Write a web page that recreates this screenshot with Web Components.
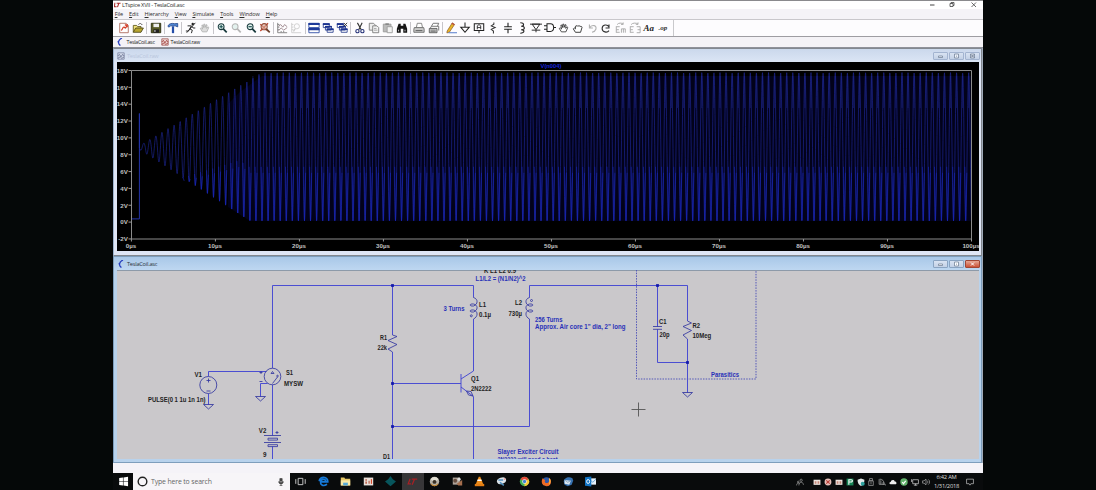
<!DOCTYPE html>
<html lang="en">
<head>
<meta charset="utf-8">
<title>LTspice XVII - TeslaCoil.asc</title>
<style>
html,body{margin:0;height:100%;background:#050808;overflow:hidden}
body{font-family:"Open Sans","Noto Sans",sans-serif;color:#333;display:flex;justify-content:center}
</style>
</head>
<body>
<desktop-screen></desktop-screen>
<script>
const define=(name,css,html,setup)=>customElements.define(name,class extends HTMLElement{
  connectedCallback(){
    if(this.shadowRoot)return;
    const t=document.createElement('template');
    t.innerHTML='<style>*{box-sizing:border-box}'+css+'</style>'+(typeof html==='function'?html(this):html);
    this.attachShadow({mode:'open'}).appendChild(t.content.cloneNode(true));
    if(setup)setup(this,this.shadowRoot);
  }
});

/* Toolbar glyphs, 14x14 grid */
const lens=(c)=>`<circle cx="6" cy="5.5" r="3.4" fill="#e3f1ee" stroke="${c}" stroke-width="1.2"/><path d="M8.5 8l4 4" stroke="${c}" stroke-width="2"/>`;
const cascade='<path d="M1.5 2h7v4.5h-7zM4 5h7v4.5H4zM6 8h7v4H6z" fill="#fff" stroke="#2a3f8f"/><path d="M1 2.5h8M3.5 5.5h8M5.500 8.500h8" stroke="#1c3390" stroke-width="1.8"/>';
const hand='<path d="M4 11.500L1.500 7.500l1-.8 1.700 1.500-.9-4.500 1.200-.2 1 3 .1-4h1.200l.4 3.800 1.100-3.200 1.100.3-.5 4 1.600-1.800.9.800-2.200 5.100z"';
const I={
 new:'<path d="M2 1.500h7.500l2.500 2.500v8.500H2z" fill="#fff" stroke="#a65"/><path d="M3.500 9.500c2 .5 1.500-4 3.500-3.500s1 3 3.500-2M8 3.500h2.800v2.700" stroke="#d6402c" stroke-width="1.500" fill="none"/>',
 open:'<path d="M1.500 12V4h4l1 1.300h4V8" fill="#f2e27a" stroke="#5d571c"/><path d="M1.500 12l2.800-5h9L10.500 12z" fill="#b8a530" stroke="#4c4718"/><path d="M7.500 3c2-2 3-1.500 4.500.5" stroke="#444" fill="none"/>',
 save:'<path d="M1.500 1.500h11v11h-11z" fill="#585b26" stroke="#27290c"/><path d="M4 2h6.500v4H4z" fill="#eee"/><path d="M4 8.500h6.500v4H4z" fill="#222"/><path d="M5 9.500h1.500v2H5z" fill="#ddd"/>',
 hammer:'<path d="M1 5c1-3 4-4 8-3l3.500-.3v4L9.500 4.500H4L2.500 6z" fill="#4f86d4" stroke="#1d3f86" stroke-width=".9"/><path d="M5.700 5h2.600v8H5.700z" fill="#244da8"/>',
 run:'<circle cx="9" cy="2.300" r="1.400" fill="#222"/><path d="M3 4.500h4.500L5.500 8l3 1.500-1 3.500M5.500 8L4 10.500H1M8 5l1.500 2H12M12 1L2 12.500" stroke="#222" stroke-width="1.100" fill="none"/>',
 stop:hand+' fill="#ddd" stroke="#aaa" stroke-width=".9"/>',
 zin:lens('#17393c')+'<path d="M4 5.500h4M6 3.500v4" stroke="#124b4b" stroke-width="1.200"/>',
 pan:lens('#b5b5b5'),
 zout:lens('#17393c')+'<path d="M4 5.500h4" stroke="#124b4b" stroke-width="1.300"/>',
 zfull:'<path d="M1.500 2.500l9 8M10.500 1.500l-9 9" stroke="#c0452e" stroke-width="1.600"/><circle cx="6" cy="5.500" r="3.600" fill="#d9b1a0" fill-opacity=".6" stroke="#944a36" stroke-width="1.200"/><path d="M8.500 8l4 4" stroke="#69402d" stroke-width="2"/>',
 auto:'<path d="M2 1v11.500h11M2 3h2M2 6h2M2 9h2M6 12v-1.500M9 12v-1.500" stroke="#777" fill="none"/><path d="M3 5l2.500-2L8 6l2-3 3 2.500M3 10l3-3 3 2.500 4-3" stroke="#978085" fill="none"/>',
 auto2:'<path d="M2 1v11.500h11M2 3h2M2 6h2M2 9h2" stroke="#ccc" fill="none"/><circle cx="8" cy="5" r="3" fill="none" stroke="#ccc"/><path d="M6 8l-2 3" stroke="#ccc" stroke-width="1.500"/>',
 tile:'<path d="M1 1.500h12v5H1zM1 7.500h12v5H1z" fill="#fff" stroke="#2746a3"/><path d="M.500 2.300h13M.500 8.300h13" stroke="#1d3999" stroke-width="2.400"/>',
 casc:cascade,
 closeall:cascade+'<path d="M9 1l4 4M13 1L9 5" stroke="#333" stroke-width="1.100"/>',
 cut:'<path d="M4 1l4.500 8M9.500 1L5.500 9" stroke="#333" stroke-width="1.300"/><circle cx="4" cy="10.700" r="1.900" fill="none" stroke="#29357a" stroke-width="1.300"/><circle cx="9.800" cy="10.700" r="1.900" fill="none" stroke="#29357a" stroke-width="1.300"/>',
 copy:'<path d="M1.500 1.500h5l2 2v6h-7z" fill="#eee" stroke="#777"/><path d="M5.500 4.500h5l2 2v6h-7z" fill="#f4f4f4" stroke="#777"/><path d="M7 7.500h3M7 9.500h4" stroke="#888" stroke-width=".8"/>',
 paste:'<path d="M1.500 2.500h9v9h-9z" fill="#bbb" stroke="#999"/><path d="M4 1.500h4v2H4z" fill="#888"/><path d="M6 5.500h6v7H6z" fill="#f3f3f3" stroke="#999"/>',
 find:'<path d="M3 2h2.500v2.500h3V2H11l2 6v4.500H8.500V8h-3v4.500H1V8z" fill="#151515"/><path d="M3 9v2M10.500 9v2" stroke="#ddd"/>',
 print:'<path d="M4 6l1-4.500h5L11 6" fill="#fff" stroke="#777"/><path d="M1.500 6.500h11l.5 2v3.500H1V8.500z" fill="#c9c9c9" stroke="#666"/><path d="M3 10h8" stroke="#555"/>',
 setup:'<path d="M4 5l2-3.500h6.500L11 5M2.500 7.500L4 5h8.500v5" fill="#fff" stroke="#666"/><path d="M1.500 7.500h9v5h-9z" fill="#ccc" stroke="#555"/><path d="M3 9.500h6M3 11h6" stroke="#555" stroke-width=".7"/>',
 pencil:'<path d="M2.500 10.500L8.500 1l2.700 1.800-6 9-3 1z" fill="#e7b528" stroke="#8b5824" stroke-width=".8"/><path d="M8 1.500l2.800 1.800" stroke="#bc4a45" stroke-width="1.500"/><path d="M4 12.500h10" stroke="#6688d1" stroke-width="1.300"/>',
 gnd:'<path d="M7 .5V6M2 6h10L7 12z" fill="none" stroke="#222" stroke-width="1.200"/>',
 label:'<path d="M1.500 2h11v8h-11zM7 10v3" fill="none" stroke="#222" stroke-width="1.200"/><path d="M5 8.500V4.500L7 3l2 1.500v4M5 6.500h4" fill="none" stroke="#222"/>',
 res:'<path d="M8 .5v2L5 4.500l4.500 2-4.500 2 2.500 2v3" fill="none" stroke="#333" stroke-width="1.200"/>',
 cap:'<path d="M7 1v4.500M7 8.500V13M2.500 5.500h9M2.500 8.500h9" stroke="#222" stroke-width="1.300"/>',
 ind:'<path d="M5 1c5 0 5 4 1 4 5 0 5 4 0 4 5 0 4 4-1 4" fill="none" stroke="#222" stroke-width="1.200"/>',
 diode:'<path d="M0 2.500h14M2.500 2.500h9L7 9zM2 9.500h10M7 9.500V12" fill="none" stroke="#222" stroke-width="1.100"/>',
 gate:'<path d="M3.500 2h4c5 0 5 9 0 9h-4zM0 4.500h3.500M0 8.500h3.500M11.200 6.500H14" fill="none" stroke="#222" stroke-width="1.200"/>',
 move:hand+' fill="#fff" stroke="#222" stroke-width=".9"/>',
 drag:'<path d="M4 12L1.500 8l1.300-1L4 8V5c1-1 2-.8 2 0 .5-1 2-.8 2 0 .7-.8 2-.4 2 .3.800-.3 1.700 0 1.700 1L10 12z" fill="#fff" stroke="#222"/>',
 undo:'<path d="M4 3v4h4M4 7c3-5 9-3 7.500 1.500C11 10 9.500 11.500 7 12" fill="none" stroke="#b0b0b0" stroke-width="1.300"/>',
 redo:'<path d="M10.500 3v4h-4M10.500 5.800C8.500 2 2.500 3 2.500 7.500c0 4.500 6 5.500 8 2.500" fill="none" stroke="#333" stroke-width="1.300"/>',
 rot:'<path d="M2.500 3C4 .8 8 .8 9.500 2.500M9.500.5v2.300H7M1.500 5v7.500M1.500 5.500h4M1.500 9h3M1.500 12h4M7.500 12.500V8h4.500v4.500M9.800 8v4.500" fill="none" stroke="#aaa" stroke-width="1.100"/>',
 mir:'<path d="M2.500 3C4 .8 9 .8 10.500 2.500M10.500.5v2.300H8M1.500 5v7.500M1.500 5.500h4M1.500 9h3M1.500 12h4M9 5.500h4v7H9M10 9h3" fill="none" stroke="#aaa" stroke-width="1.100"/>'
};
define('tool-icon',
 ':host{display:flex;flex:0 0 14.13px;height:12px;align-items:center;justify-content:center;font:italic 700 9px "Liberation Serif",serif;color:#222}svg{width:12px;height:12px;display:block}',
 el=>{const n=el.getAttribute('name');return I[n]?`<svg viewBox="0 0 14 14">${I[n]}</svg>`:'<slot></slot>'});
define('tool-sep',':host{display:block;flex:0 0 1px;height:12px;margin:0 1.200px;background:#c7c5ca}','');

const tools='new open | save | hammer | run stop | zin pan zout zfull | auto auto2 | tile casc closeall | cut copy paste find | print setup | pencil gnd label res cap ind diode gate move drag undo redo rot mir'.split(' ')
 .map(n=>n==='|'?'<tool-sep></tool-sep>':`<tool-icon name="${n}"></tool-icon>`).join('');
define('tool-bar',
 ':host{display:flex;height:18px;align-items:center;padding:0 0 1px 4px;background:#fdfcfe;border-top:1px solid #c9c7cb;border-bottom:1px solid #9e9da2}.op{font:italic 700 7px "Liberation Serif",serif;color:#333}i{display:block;width:1px;height:16px;background:#c9c9cc;margin-left:3px}',
 tools+'<tool-icon name="txt">Aa</tool-icon><tool-icon name="txt"><span class="op">.op</span></tool-icon><i></i>');

define('window-title',
 ':host{display:flex;height:9px;align-items:center;padding-left:1px;background:#fff;border-top:1px solid #8a8a8d;font-size:5.700px;letter-spacing:-.25px;color:#2c2c2c}svg{display:block}.logo{width:7px;height:8px;margin-right:1px}span{flex:1;white-space:nowrap}.ctl{width:52px;height:8px;margin-right:5px}',
 '<svg class="logo" viewBox="0 0 8 8"><path d="M1 1.500L.5 6h2.500M3 2h4.500M5.500 2L4 6.500" stroke="#a92b2b" stroke-width="1.200" fill="none"/></svg><span><slot></slot></span><svg class="ctl" viewBox="0 0 52 8"><path d="M4 4h4.500" stroke="#444"/><path d="M24 2.500h3v3h-3zM25 2.500v-1h3v3h-1M45.500 1.500l4.500 4.500M50 1.500l-4.500 4.500" stroke="#444" fill="none" stroke-width=".8"/></svg>');

define('menu-bar',
 ':host{display:flex;height:10px;align-items:center;padding-left:1.700px;gap:6px;background:#f5f3f7;font-size:5.500px;letter-spacing:-.08px;color:#2c2c2c}u{text-decoration-thickness:.5px;text-underline-offset:.5px}',
 ['File','Edit','Hierarchy','View','Simulate','Tools','Window','Help'].map(s=>`<span><u>${s[0]}</u>${s.slice(1)}</span>`).join(''));

const docIcon={
 asc:'<path d="M7.500 0C2 2.500 2 7 5.500 9.500M2 4.700h2" stroke="#263dbd" stroke-width="1.600" fill="none"/>',
 raw:'<path d="M1 1h8v8H1z" fill="#eed7d4" stroke="#a35c58"/><path d="M1 5l2-2 2 3 2-3 2 2M1 8l3-2 2 2 3-2" stroke="#9c3430" fill="none"/>',
 rawdim:'<path d="M1 1h8v8H1z" fill="#d3daea" stroke="#7e87a3"/><path d="M1 5l2-2 2 3 2-3 2 2M1 8l3-2 2 2 3-2" stroke="#66708f" fill="none"/>'};
define('doc-icon',':host{display:block;width:8px;height:8px}svg{display:block;width:100%;height:100%}',el=>`<svg viewBox="0 0 10 10">${docIcon[el.getAttribute('kind')]}</svg>`);
define('tab-bar',
 ':host{display:flex;height:11px;background:#f4f2f6;border-bottom:1px solid #8e9099;font-size:5.350px;letter-spacing:-.26px;color:#222}div{display:flex;align-items:center;gap:2.500px;padding-left:3px;width:45px;white-space:nowrap}div:first-child{background:#fdfcff}div+div{gap:1.500px}',
 '<div><doc-icon kind="asc"></doc-icon>TeslaCoil.asc</div><div><doc-icon kind="raw"></doc-icon>TeslaCoil.raw</div>');

define('child-window',
 `:host{display:flex;flex-direction:column;border:1px solid #82878f;border-left-color:#9eb4ce;padding:0 2px 3px 3px;background:#dfe6f5;overflow:hidden}
 :host([active]){background:#b8d2ec;border-color:#7e9ebc}
 header{display:flex;flex:0 0 13px;align-items:center;height:13px;gap:2px;font-size:5.600px;letter-spacing:-.22px;color:#b9c6dd;margin:0 -2px 0 -3px;padding:0 1px 0 3px;background:linear-gradient(#cbd8ec,#dbe5f5)}
 :host([active]) header{color:#2a2f38;background:linear-gradient(#a9c8e8,#bed7f1)}
 span{flex:1}b{display:block;width:15px;height:8px;border:1px solid #a3b4d0;border-radius:1px;margin-left:-1px;background:linear-gradient(#d9e3f2,#c3d1e6)}
 svg{display:block;width:13px;height:6px}
 :host([active]) b{border-color:#8aa4c2}:host([active]) b.x{background:linear-gradient(#e6a795,#cc5237);border-color:#a14735}`,
 el=>{const a=el.hasAttribute('active'),c=a?'#fff':'#edf2fa',s='#69788f';const b=(k,p)=>`<b class="${k}"><svg viewBox="0 0 13 6">${p}</svg></b>`;
 return `<header><doc-icon kind="${a?'asc':'rawdim'}"></doc-icon><span>${el.getAttribute('label')}</span>${b('',`<path d="M4.500 3h4v1.500h-4z" fill="${c}" stroke="${s}" stroke-width=".7"/>`)}${b('',`<path d="M4.500 1h4v4h-4z" fill="${c}" stroke="${s}" stroke-width=".7"/><path d="M6 2.700h1v.8H6z" fill="${s}"/>`)}${b('x',`<path d="M4.500 1h4v4h-4z" fill="${a?'none':c}" stroke="${a?'none':s}" stroke-width=".7"/><path d="M5 1.500l3 3M8 1.500l-3 3" stroke="${a?'#fff':s}" stroke-width="1"/>`)}</header><slot></slot>`});

/* Waveform viewer */
define('wave-plot',
 ':host{display:block;background:#000;height:189px;overflow:hidden}svg{display:block}text{font:700 6.200px "Liberation Sans",sans-serif;fill:#c0c0c0}',
 ()=>{
  const X0=131.4,PX=8.401,yv=v=>222.1-v*8.422,T=6.066,ref=325.7;
  const dnAt=t=>Math.min(8.75,.3+.645*(t-1));
  let ax='',d='M140 150';
  for(let i=-1;i<=9;i++){const y=yv(i*2);ax+=`<path d="M128.500 ${y}h3" stroke="#999"/><text x="127.800" y="${y+2.300}" text-anchor="end">${i*2}V</text>`}
  for(let i=0;i<=10;i++){const x=X0+i*10*PX;ax+=`<path d="M${x} 239v2.500" stroke="#999"/><text x="${x-.4}" y="248" text-anchor="middle">${i*10}µs</text>`}
  for(let x=140;x<=971.5;x+=.25){
    const t=(x-X0)/PX;
    const up=Math.min(8.85,.2+.595*(t-1)),dn=dnAt(t);
    const c=Math.cos((x-ref)/T*2*Math.PI);
    d+=`L${x} ${yv(8.9+(c>0?up*c:dn*c)).toFixed(1)}`;
  }
  let low='',hi='';
  for(let k=-25;k<=106;k++){const x=ref+k*T,b=x-T/2,g=Math.min(1,(b-180)/60);
    if(x<971&&x>250)hi+=`M${x.toFixed(1)} 76V108`;
    if(g>0&&b<970){const end=Math.min(221.5,yv(8.9-dnAt((b-X0)/PX)));const top=end-54*g;
      low+=`M${(b-.8).toFixed(1)} ${(top+3*(1-g)).toFixed(1)}L${b.toFixed(1)} ${end.toFixed(1)}L${(b+1.1).toFixed(1)} ${(top+6).toFixed(1)}`}}
  return `<svg width="862" height="189" viewBox="117 62 862 189"><path d="M240 92L262 76H971V221H250L228 207V104z" fill="#04042c" opacity=".6"/><path d="${d}" fill="none" stroke="#1e2799" stroke-width=".75" opacity=".85"/><path d="${hi}" stroke="#26319e" stroke-width=".8" opacity=".55"/><path d="${low}" fill="none" stroke="#1826be" stroke-width=".9" opacity=".65"/><path d="M${X0} 218.900H139.400V113.500V148" fill="none" stroke="#2333a8"/><path d="M131.500 70.500H971.500V239H131.500z" fill="none" stroke="#8b8b8b"/>${ax}<text x="540.500" y="68" textLength="21" lengthAdjust="spacingAndGlyphs" style="fill:#1423dc">V(n004)</text></svg>`});

/* Schematic editor */
define('schematic-view',
 ':host{display:block;background:#cac8cb;height:189px;overflow:hidden;box-shadow:inset 0 1px #8d9aa9}svg{display:block}text{font:700 6.700px "Liberation Sans",sans-serif;fill:#222}.n{fill:#2930b8}.w{fill:none;stroke:#4348d2;stroke-width:.95}',
 ()=>{
  const t=(s,x,y,w,c='')=>`<text x="${x}" y="${y}" textLength="${w}" lengthAdjust="spacingAndGlyphs" class="${c}">${s}</text>`;
  const dot=(x,y)=>`<path d="M${x-1.400} ${y-1.400}h2.800v2.800h-2.800z" fill="#1519aa"/>`;
  return `<svg width="862" height="189" viewBox="117 270 862 189">
  <path class="w" d="M272.500 368.200V285.500H473.500V297M529.500 297V285.500H687.500V321M392.500 285.500V335M392.500 352V459M392.500 383.500H461M392.500 426.500H529.500V319M473.500 319V371L461 379M461 374V392.500M461 387L473.500 396.500V459M657.500 285.500V326.500M657.500 329.300V362.500H687.500M687.500 339V392.500M208.500 376.300V371.500H266.500M208.500 393.700V404.500M267.500 383.500H260.500V396.500M272.500 384.800V435.500M272.500 446.500V459"/>
  <g fill="none" stroke="#3437a0" stroke-width=".85">
  <circle cx="208.300" cy="385" r="8.500"/><circle cx="272.500" cy="376.500" r="8.300"/>
  <path d="M203.500 404.500h10l-5 4.500zM255.500 396.500h10l-5 4.500zM682.500 392.500h10l-5 4.500zM206.500 380.500h4M208.500 378.500v4M206.500 391h4M271 373.500l1.500-2 1.500 2zM272.500 383.500l5-6.500M259.500 372.500h3M261 371v3M259.500 381.500h3"/><circle cx="277.500" cy="376" r=".8"/>
  <path d="M264 435.500h17M264 442.500h17M268 438.200h9.500v1.900H268zM268 444.700h9.500v1.900H268zM275.500 432.500h3M277 431v3"/>
  <path d="M392.500 335l4.500 1.500-9 4 9 4-9 4.500 4.500 3M687.500 321l4 2-8.500 3.500 8.500 4-8.500 4.500 4.500 4M653 326.500h9M653 329.300h9"/>
  <path d="M466.500 391l4.500.5 2 4.500-4.500-1z"/>
  <path d="M473.500 297v.5c5 1.500 4.500 7 0 8.500-4.500.5-4.500-2.500 0-2 5 1 4.500 6.500 0 8-4.500.5-4.500-2.500 0-2 5 1 4.500 7 0 9M529.500 297v.5c-5 1.500-4.500 7 0 8.500 4.500.5 4.500-2.500 0-2-5 1-4.500 6.500 0 8 4.500.5 4.500-2.500 0-2-5 1-4.500 7 0 9"/><circle cx="471.300" cy="315.800" r="1"/><circle cx="531.500" cy="300.500" r="1"/></g>
  <path d="M636.500 270V379H756V270" fill="none" stroke="#5558b8" stroke-dasharray="1.500 1.200"/>
  <path d="M631.500 409.500h14M638.500 402.500v14" stroke="#555" stroke-width=".9"/>
  ${dot(392.5,285.5)+dot(392.5,383.5)+dot(392.5,426.5)+dot(657.5,285.5)+dot(687.5,362.5)}
  ${t('K L1 L2 0.9',484,273,32)+t('L1/L2 = (N1/N2)^2',475.5,280.8,50,'n')+t('3 Turns',443.5,311,21,'n')+t('L1',479,306.700,7)+t('0.1µ',479,317.300,12)+t('L2',515,305,7)+t('730µ',508.500,316.200,13.500)+t('256 Turns',535,321.700,27.500,'n')+t('Approx. Air core 1" dia, 2" long',535,329.300,90.500,'n')+t('R1',380,340,7)+t('22k',377.500,349.700,9.500)+t('Q1',471,381.300,8)+t('2N2222',471,390.700,20.500)+t('C1',659,323.800,7.500)+t('20p',659.500,337,10)+t('R2',692.500,328.200,7.500)+t('10Meg',692.500,338.200,18.700)+t('Parasitics',711,377.300,28,'n')+t('V1',194.500,377.300,7.500)+t('PULSE(0 1 1u 1n 1n)',148,401.500,57.500)+t('S1',286,375.300,7)+t('MYSW',284,386.200,19)+t('V2',258.800,433.200,7.500)+t('9',263,456.500,3.500)+t('D1',383,458.600,7)+t('Slayer Exciter Circuit',497.500,454.300,61,'n')+t('2N2222 will need a heat',497.500,462,60,'n')}
  </svg>`});

/* Task bar: pinned applications and notification icons on a 14x14 grid */
const A={
 start:'<path d="M1.500 2.700l4.800-.7v4.600H1.500zM7 1.900l5.800-.9v5.600H7zM1.500 7.400h4.800V12l-4.800-.7zM7 7.400h5.800V13L7 12.100z" fill="#fff"/>',
 view:'<path d="M4 3h6v8H4zM1 4v6M13 4v6" fill="none" stroke="#ccc" stroke-width="1.200"/>',
 edge:'<path d="M11.500 10.500C6 14 2.500 10.500 3.500 7.500h9C13 0 2 0 1.500 6.500 3 4 9 3 9 6M3.500 8C3 4 10 3 10 6.500" fill="none" stroke="#1679d8" stroke-width="2"/>',
 folder:'<path d="M1 2h4.500l1 1.500H13V12H1z" fill="#e8c869"/><path d="M1 5.500h12V12H1z" fill="#f8e9a8"/><path d="M4 8.500h6V12H4z" fill="#55a9d8"/>',
 ppt:'<path d="M1 2h12v10H1z" fill="#e8dfda"/><path d="M3 4h2v2H3zM3 7h2v3H3zM7 6h1.500v4H7z" fill="#b8614a"/><path d="M10 4h1.500v6H10z" fill="#d84a2b"/>',
 teal:'<path d="M7 0l3 4 4 3-4 3.500-3 2.500-3-2.500L0 7l4-3z" fill="#07555c"/>',
 lt:'<path d="M4 3.500L1.500 10h3.500M6 4h7M9.500 4L6.500 11" fill="none" stroke="#a91f24" stroke-width="1.600"/>',
 ball:'<circle cx="7" cy="7" r="6" fill="#b7b2a8"/><path d="M2 4a6 6 0 0110 0l-2 2H4z" fill="#e2ded3"/><circle cx="7" cy="7.500" r="2.500" fill="#393126"/><path d="M2.500 10a5.500 5.500 0 009 0" fill="none" stroke="#bd8433" stroke-width="1.500"/>',
 gimp:'<path d="M1 2h9v9H1z" fill="#aea39a"/><circle cx="4" cy="6" r="2.500" fill="#664d40"/><path d="M6 10l7-5v7H8z" fill="#a46e4d"/><circle cx="9" cy="4" r="2" fill="#ddd"/>',
 vlc:'<path d="M6 1h2l4 10H2z" fill="#ed8c1b"/><path d="M4.800 4.500h4.400l.8 2H4z" fill="#fff"/><path d="M1 10h12v3H1z" fill="#e37d13"/>',
 paint:'<ellipse cx="7" cy="6" rx="6" ry="4" fill="#dce3e8" transform="rotate(-20 7 6)"/><path d="M5 8l5 4M3 5h6" stroke="#5290be" stroke-width="2"/><circle cx="11" cy="4" r="1.200" fill="#eb9a9a"/>',
 chrome:'<circle cx="7" cy="7" r="6" fill="#3fae55"/><path d="M7 7L1.800 4A6 6 0 0112.200 4z" fill="#e4483a"/><path d="M7 7l5.200-3A6 6 0 017 13z" fill="#f5c934"/><circle cx="7" cy="7" r="2.800" fill="#fff"/><circle cx="7" cy="7" r="2.100" fill="#3d80d3"/>',
 fox:'<circle cx="7" cy="7" r="5.500" fill="#2e58a8"/><path d="M2 3c-3 6 1 10 5 10 5 0 7-5 5-9l-2-2c2 5-1 7-3 7S4 7 5.500 5.500z" fill="#ee6b24"/><path d="M11 3c2 3 1 7-1 8 1-3 1-5 0-7z" fill="#ffc745"/>',
 bird:'<path d="M1 7C1 2 8 0 12 3l1 3-2 5-5 2-4-2z" fill="#356fae"/><path d="M2 5l8 1-2 5-6-1z" fill="#dce7f1"/><path d="M2 5l4 3 4-2" stroke="#7c9ab7" fill="none"/>',
 outlook:'<path d="M5 3h9v8H5z" fill="#e8f2fb"/><path d="M5 4l5 4 4-4" fill="none" stroke="#5596cc"/><path d="M0 1.500L8 .5v13L0 12.500z" fill="#1274c5"/><ellipse cx="4" cy="7" rx="1.900" ry="2.500" fill="none" stroke="#fff" stroke-width="1.200"/>',
 people:'<circle cx="9" cy="4" r="2" fill="none" stroke="#bbb"/><path d="M5 13c0-7 8-7 8-1M1 13c0-4 3-5 5-4" fill="none" stroke="#bbb"/><circle cx="4" cy="7" r="1.500" fill="none" stroke="#bbb"/>',
 card:'<path d="M1 3h12v9H1z" fill="#eee5e0"/><path d="M3 5.500h3V10H3zM8 5.500h3V10H8z" fill="#c58778"/>',
 red:'<circle cx="7" cy="7" r="6" fill="#e5bfb9"/><path d="M4 4l6 6M10 4L4 10" stroke="#bc4038" stroke-width="2"/>',
 green:'<path d="M1 1h12v12H1z" fill="#188657"/><path d="M5 12V3h4c3 0 3 4 0 4H5" stroke="#fff" stroke-width="1.800" fill="none"/>',
 shield:'<path d="M7 1l6 2c0 6-2 9-6 11-4-2-6-5-6-11z" fill="#e4e9e9"/><circle cx="10" cy="10" r="3.500" fill="#2fa3a0"/>',
 usb:'<path d="M4.500 1h5v4h-5zM3 5h8v8H3zM7 7v4" fill="none" stroke="#aaa" stroke-width="1.200"/>',
 net:'<path d="M2 2v9h10M5 4v7M3 2c5 0 7 3 8 8M9 7v5M12 10l1 3" fill="none" stroke="#bbb" stroke-width="1.200"/>',
 cloud:'<path d="M3 11C0 11 0 7 3 7c0-4 6-5 7-1 4 0 4 5 1 5z" fill="#eee"/>',
 ok:'<circle cx="7" cy="7" r="6.500" fill="#63b36c"/><path d="M4 7l2 3 4-5" stroke="#fff" stroke-width="2" fill="none"/>',
 pc:'<path d="M3 3h10v7H3zM8 10v3M5 12.500h6M1 2v5" fill="none" stroke="#ddd" stroke-width="1.200"/>',
 vol:'<path d="M1 5h2.500L7 2v10L3.500 9H1zM9 4.500c1.500 1 1.500 4 0 5M11 2.500c3 2 3 7 0 9" fill="none" stroke="#ccc"/>',
 note:'<path d="M1 2h12v8H8.500L7 12.500 5.500 10H1z" fill="none" stroke="#ccc" stroke-width="1.200"/>',
 mic:'<path d="M5 1h4v7H5zM3 6c0 6 8 6 8 0M7 11v3M4.500 13.500h5" fill="#444" stroke="#444" stroke-width="1.200"/>',
 ring:'<circle cx="7" cy="7" r="5.500" fill="none" stroke="#222" stroke-width="1.800"/>'
};
define('app-icon',':host{display:flex;flex:0 0 22.280px;height:17px;align-items:center;justify-content:center}:host([on]){background:#373638}:host([s]){flex-basis:10.850px}svg{width:11px;height:11px;display:block}:host([s]) svg{width:8px;height:8px}',
 el=>`<svg viewBox="0 0 14 14">${A[el.getAttribute('name')]}</svg>`);
define('task-bar',
 `:host{display:flex;height:17px;align-items:center;background:#090b0c;color:#ddd}
 .s{display:flex;align-items:center;width:157px;height:17px;background:#f7f5f8;color:#666;font-size:6.900px;letter-spacing:-.14px;padding:0 4px}.s span{flex:1;padding-left:3px}
 .s app-icon{flex-basis:11px}.st{flex-basis:20px}.v{flex-basis:21px}.sp{flex:1}time{font-size:5.800px;letter-spacing:-.25px;line-height:8.200px;text-align:center;width:31px;white-space:nowrap}.n{flex-basis:15px!important}`,
 '<app-icon class="st" name="start"></app-icon><div class="s"><app-icon name="ring"></app-icon><span>Type here to search</span><app-icon s name="mic"></app-icon></div><app-icon class="v" name="view"></app-icon><div style="width:1.500px"></div>'
 +'edge folder ppt teal lt ball gimp vlc paint chrome fox bird outlook'.split(' ').map(n=>`<app-icon name="${n}"${n==='lt'?' on':''}></app-icon>`).join('')
 +'<div class="sp"></div><app-icon s name="people"></app-icon><div style="width:6px"></div>'
 +'card red card green shield usb net cloud ok pc vol'.split(' ').map(n=>`<app-icon s name="${n}"></app-icon>`).join('')
 +'<time>6:42 AM<br>1/31/2018</time><app-icon s class="n" name="note"></app-icon><div style="width:6px"></div>');

define('desktop-screen',
 ':host{display:flex;flex-direction:column;width:870px;height:490px;background:#f4f2f6;overflow:hidden}.mdi{display:flex;flex-direction:column;height:415px;border-right:1px solid #a2acba}child-window{flex:0 0 207px}.w1{height:208px;flex-basis:208px}.status{height:10px;background:#f5f3f8}',
 '<window-title>LTspice XVII - TeslaCoil.asc</window-title><menu-bar></menu-bar><tool-bar></tool-bar><tab-bar></tab-bar><div class="mdi"><child-window class="w1" label="TeslaCoil.raw"><wave-plot></wave-plot></child-window><child-window active label="TeslaCoil.asc"><schematic-view></schematic-view></child-window></div><div class="status"></div><task-bar></task-bar>');
</script>
</body>
</html>
